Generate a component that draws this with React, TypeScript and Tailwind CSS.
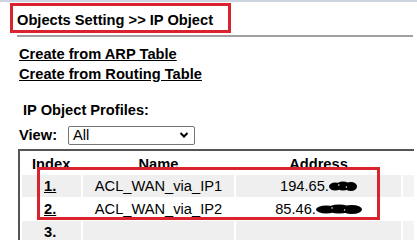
import React from "react";

const rows = [
  { index: "1.", name: "ACL_WAN_via_IP1", prefix: "194.65.", blot: 28, shaded: true },
  { index: "2.", name: "ACL_WAN_via_IP2", prefix: "85.46.", blot: 46, shaded: false },
  { index: "3.", name: "", prefix: "", blot: 0, shaded: true },
];

// scribbled-out part of an address
function Blot({ width }: { width: number }) {
  return (
    <svg width={width} height="12" viewBox={`0 0 ${width} 12`} className="inline-block">
      <ellipse cx={width * 0.22} cy="6.5" rx={width * 0.22} ry="4" fill="#000" />
      <ellipse cx={width * 0.5} cy="6" rx={width * 0.25} ry="4.5" fill="#000" />
      <ellipse cx={width * 0.78} cy="6.5" rx={width * 0.22} ry="4.5" fill="#000" />
      <circle cx={width * 0.35} cy="5" r="0.8" fill="#fff" />
      <circle cx={width * 0.62} cy="7" r="0.7" fill="#fff" />
    </svg>
  );
}

export default function App() {
  return (
    <div className="relative w-[417px] h-[240px] overflow-hidden bg-white text-black text-[14.67px] font-['Liberation_Sans',Arial,sans-serif]">
      {/* top strip */}
      <div className="h-[2px] bg-[#ccd4df]" />

      {/* title */}
      <div className="pl-[17px] pt-[9px] h-[33px] font-bold leading-[18px]">
        Objects Setting &gt;&gt; IP Object
      </div>
      <div className="ml-[17px] mr-[4px] h-[2px] bg-[#a0a0a0]" />

      {/* links */}
      <div className="pl-[19px] pt-[7px] flex flex-col font-bold leading-[20px]">
        <a className="underline w-fit">Create from ARP Table</a>
        <a className="underline w-fit">Create from Routing Table</a>
      </div>

      {/* profiles */}
      <div className="pl-[23px] pt-[17px] font-bold leading-[18px]">IP Object Profiles:</div>
      <div className="pl-[19px] pt-[5px] flex items-center gap-[11px] font-bold">
        <span>View:</span>
        <div className="w-[127px] h-[19px] border border-[#767676] rounded-[2px] flex items-center justify-between pl-[4px] pr-[5px] font-normal">
          <span>All</span>
          <svg width="10" height="8" viewBox="0 0 10 8">
            <path d="M1.5 2 L5 5.5 L8.5 2" stroke="#000" strokeWidth="2" fill="none" />
          </svg>
        </div>
      </div>

      {/* table */}
      <div className="ml-[18px] mr-[3px] mt-[3px] border-t-2 border-l-2 border-[#555] pl-[2px] pt-[2px]">
        <div className="grid grid-cols-[59px_151px_165px_1fr] gap-[2px] h-[20px] items-center font-bold">
          <span className="pl-[10px]">Index</span>
          <span className="text-center">Name</span>
          <span className="text-center">Address</span>
          <span />
        </div>
        <div className="flex flex-col gap-[2px] mt-[2px]">
          {rows.map((r) => (
            <div key={r.index} className="grid grid-cols-[59px_151px_165px_1fr] gap-[2px] h-[21px]">
              <div className={`${r.shaded ? "bg-[#efefef]" : "bg-white"} pl-[22px] font-bold flex items-center`}>
                <span className={r.name ? "underline" : ""}>{r.index}</span>
              </div>
              <div className={`${r.shaded ? "bg-[#efefef]" : "bg-white"} flex items-center justify-center`}>{r.name}</div>
              <div className={`${r.shaded ? "bg-[#efefef]" : "bg-white"} flex items-center justify-center`}>
                {r.prefix}
                {r.blot > 0 && <Blot width={r.blot} />}
              </div>
              <div className={r.shaded ? "bg-[#f3f3f3]" : "bg-white"} />
            </div>
          ))}
        </div>
      </div>

      {/* red annotation boxes */}
      <div className="absolute left-[10px] top-[3px] w-[221px] h-[30px] border-[3px] border-[#d9232e]" />
      <div className="absolute left-[37px] top-[167px] w-[343px] h-[53px] border-[3px] border-[#d9232e]" />
    </div>
  );
}
